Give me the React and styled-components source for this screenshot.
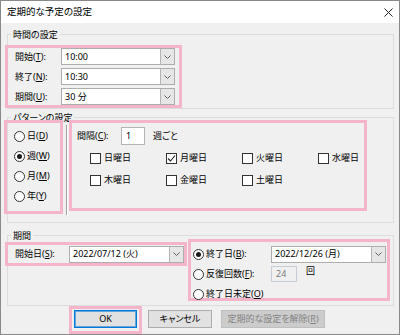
import React from 'react';
import styled, { createGlobalStyle } from 'styled-components';

const Global = createGlobalStyle`
  html, body { margin: 0; padding: 0; background: #fff; }
  body {
    font-family: "Noto Sans", "Noto Sans CJK JP", sans-serif;
    font-size: 9px;
    line-height: 12px;
    color: #000;
    text-autospace: no-autospace;
  }
  * { box-sizing: border-box; }
  u { text-underline-offset: 1px; }
`;

const PINK = '#f4b5cb';

const Window = styled.div`
  width: 400px;
  height: 335px;
  border: 1px solid #8a8a8a;
  background: #f0f0f0;
  display: flex;
  flex-direction: column;
  overflow: hidden;
  font-feature-settings: "palt";
`;

const TitleBar = styled.div`
  height: 22px;
  flex: none;
  background: #fff;
  display: flex;
  align-items: center;
  justify-content: space-between;
  padding: 0 6px 0 6px;
  font-size: 9.5px;
`;

const CloseIcon = styled.svg`
  width: 9px;
  height: 9px;
  display: block;
`;

const Body = styled.div`
  display: flex;
  flex-direction: column;
  padding: 0 5px 0 6px;
`;

const Group = styled.fieldset`
  margin: ${p => p.$mt}px 0 0 0;
  padding: 0;
  border: 1px solid #dcdcdc;
  min-width: 0;
`;

const Legend = styled.legend`
  margin-left: 3px;
  padding: 0 2px;
  line-height: 15px;
  font-size: 9px;
`;

const Highlight = styled.div`
  border: 3px solid ${PINK};
  flex: none;
`;

/* ---------- time section ---------- */
const TimeBox = styled(Highlight)`
  width: 177px;
  height: 63px;
  margin: 3px 0 0 -3px;
  padding: 0 4px 0 7px;
  display: flex;
  flex-direction: column;
  gap: 3px;
`;

const FieldRow = styled.div`
  display: flex;
  align-items: center;
  height: 17px;
`;

const FieldLabel = styled.span`
  width: ${p => p.$w}px;
  flex: none;
  white-space: nowrap;
`;

const Combo = styled.div`
  display: flex;
  width: ${p => p.$w}px;
  height: 17px;
  background: #fff;
  border: 1px solid #adadad;
  flex: none;
`;

const ComboText = styled.div`
  flex: 1;
  display: flex;
  align-items: center;
  padding-left: 3px;
  white-space: nowrap;
`;

const ComboButton = styled.div`
  width: 14px;
  background: #e6e6e6;
  border-left: 1px solid #b5b5b5;
  display: flex;
  align-items: center;
  justify-content: center;
`;

const Chevron = () => (
  <svg width="7" height="4" viewBox="0 0 7 4" style={{ display: 'block' }}>
    <polyline points="0.5,0.5 3.5,3.5 6.5,0.5" fill="none" stroke="#606060" strokeWidth="1" />
  </svg>
);

const ComboBox = ({ w, children }) => (
  <Combo $w={w}>
    <ComboText><span>{children}</span></ComboText>
    <ComboButton><Chevron /></ComboButton>
  </Combo>
);

/* ---------- pattern section ---------- */
const PatternRow = styled.div`
  display: flex;
  align-items: flex-start;
  margin-top: -5px;
  padding-bottom: 7px;
`;

const TypeBox = styled(Highlight)`
  width: 59px;
  height: 94px;
  margin-left: -4px;
  padding: 3px 0 0 7px;
  display: flex;
  flex-direction: column;
`;

const RadioRow = styled.label`
  display: flex;
  align-items: center;
  gap: 2px;
  height: ${p => p.$h || 20}px;
  white-space: nowrap;
`;

const RadioCircle = styled.span`
  width: 11px;
  height: 11px;
  border-radius: 50%;
  border: 1px solid #333;
  background: #fff;
  flex: none;
  display: inline-flex;
  align-items: center;
  justify-content: center;
  &::after {
    content: '';
    width: 5px;
    height: 5px;
    border-radius: 50%;
    background: #1a1a1a;
    display: ${p => (p.$on ? 'block' : 'none')};
  }
`;

const Radio = ({ on, h, children }) => (
  <RadioRow $h={h}>
    <RadioCircle $on={on} />
    <span>{children}</span>
  </RadioRow>
);

const Separator = styled.div`
  width: 2px;
  height: 90px;
  margin: 5px 0 0 3px;
  border-left: 1px solid #a0a0a0;
  border-right: 1px solid #fff;
  flex: none;
`;

const DetailBox = styled(Highlight)`
  width: 298px;
  height: 91px;
  margin-left: 1px;
  padding: 4px 0 0 5px;
`;

const IntervalRow = styled.div`
  display: flex;
  align-items: center;
  height: 18px;
`;

const TextInput = styled.div`
  width: ${p => p.$w}px;
  height: ${p => p.$h}px;
  background: ${p => (p.$disabled ? '#f0f0f0' : '#fff')};
  border: 1px solid ${p => (p.$disabled ? '#c5ccd4' : '#b4b4b4')};
  color: ${p => (p.$disabled ? '#7a7a7a' : '#000')};
  display: flex;
  align-items: center;
  padding-left: 4px;
  flex: none;
`;

const Suffix = styled.span`
  margin-left: ${p => p.$ml}px;
  align-self: ${p => p.$align || 'center'};
`;

const DayGrid = styled.div`
  display: grid;
  grid-template-columns: repeat(4, 76px);
  grid-auto-rows: 22px;
  margin: 2px 0 0 13px;
`;

const DayItem = styled.label`
  display: flex;
  align-items: center;
  gap: 3px;
  white-space: nowrap;
`;

const CheckSquare = styled.span`
  width: 11px;
  height: 11px;
  border: 1px solid #333;
  background: #fff;
  flex: none;
  display: inline-flex;
  align-items: center;
  justify-content: center;
`;

const CheckBox = ({ checked }) => (
  <CheckSquare>
    {checked && (
      <svg width="9" height="9" viewBox="0 0 9 9" style={{ display: 'block' }}>
        <polyline points="1,4.5 3.5,7 8,1.5" fill="none" stroke="#222" strokeWidth="1.1" />
      </svg>
    )}
  </CheckSquare>
);

/* ---------- period section ---------- */
const PeriodRow = styled.div`
  display: flex;
  align-items: flex-start;
  margin-top: -4px;
  padding-bottom: 4px;
`;

const StartBox = styled(Highlight)`
  width: 182px;
  height: 24px;
  margin: 3px 0 0 -3px;
  padding-left: 7px;
  display: flex;
  align-items: center;
`;

const EndBox = styled(Highlight)`
  width: 202px;
  height: 62px;
  margin-left: 1px;
  padding: 3px 0 0 2px;
  display: grid;
  grid-template-columns: 78px auto;
  grid-auto-rows: 18px;
  row-gap: 2px;
  align-items: center;
`;

const EndCell = styled.div`
  display: flex;
  align-items: center;
  height: 18px;
`;

/* ---------- buttons ---------- */
const ButtonRow = styled.div`
  display: flex;
  align-items: flex-start;
  margin-left: 62px;
`;

const OkFrame = styled(Highlight)`
  width: 73px;
  height: 28px;
  padding: 1px 2px 0 2px;
`;

const Button = styled.button`
  width: ${p => p.$w}px;
  height: 18px;
  margin: ${p => p.$m || '0'};
  padding: 0;
  font: inherit;
  font-size: 9px;
  background: ${p => (p.$disabled ? '#cccccc' : '#e1e1e1')};
  color: ${p => (p.$disabled ? '#838383' : '#000')};
  border: 1px solid ${p => (p.$primary ? '#0078d7' : p.$disabled ? '#bfbfbf' : '#adadad')};
  box-shadow: ${p => (p.$primary ? 'inset 0 0 0 1px rgba(0,120,215,0.55)' : 'none')};
  flex: none;
  white-space: nowrap;
`;

export default function App() {
  return (
    <>
      <Global />
      <Window>
        <TitleBar>
          <span>定期的な予定の設定</span>
          <CloseIcon viewBox="0 0 9 9">
            <path d="M0.5 0.5 L8.5 8.5 M8.5 0.5 L0.5 8.5" stroke="#222" strokeWidth="1" fill="none" />
          </CloseIcon>
        </TitleBar>
        <Body>
          <Group $mt={4}>
            <Legend>時間の設定</Legend>
            <TimeBox>
              <FieldRow>
                <FieldLabel $w={46}>開始(<u>T</u>):</FieldLabel>
                <ComboBox w={114}>10:00</ComboBox>
              </FieldRow>
              <FieldRow>
                <FieldLabel $w={46}>終了(<u>N</u>):</FieldLabel>
                <ComboBox w={114}>10:30</ComboBox>
              </FieldRow>
              <FieldRow>
                <FieldLabel $w={46}>期間(<u>U</u>):</FieldLabel>
                <ComboBox w={114}>30 分</ComboBox>
              </FieldRow>
            </TimeBox>
          </Group>

          <Group $mt={1}>
            <Legend>パターンの設定</Legend>
            <PatternRow>
              <TypeBox>
                <Radio>日(<u>D</u>)</Radio>
                <Radio on>週(<u>W</u>)</Radio>
                <Radio>月(<u>M</u>)</Radio>
                <Radio>年(<u>Y</u>)</Radio>
              </TypeBox>
              <Separator />
              <DetailBox>
                <IntervalRow>
                  <FieldLabel $w={44}>間隔(<u>C</u>):</FieldLabel>
                  <TextInput $w={24} $h={18}>1</TextInput>
                  <Suffix $ml={8}>週ごと</Suffix>
                </IntervalRow>
                <DayGrid>
                  <DayItem><CheckBox /><span>日曜日</span></DayItem>
                  <DayItem><CheckBox checked /><span>月曜日</span></DayItem>
                  <DayItem><CheckBox /><span>火曜日</span></DayItem>
                  <DayItem><CheckBox /><span>水曜日</span></DayItem>
                  <DayItem><CheckBox /><span>木曜日</span></DayItem>
                  <DayItem><CheckBox /><span>金曜日</span></DayItem>
                  <DayItem><CheckBox /><span>土曜日</span></DayItem>
                </DayGrid>
              </DetailBox>
            </PatternRow>
          </Group>

          <Group $mt={5}>
            <Legend>期間</Legend>
            <PeriodRow>
              <StartBox>
                <FieldLabel $w={54}>開始日(<u>S</u>):</FieldLabel>
                <ComboBox w={115}>2022/07/12 (火)</ComboBox>
              </StartBox>
              <EndBox>
                <Radio on h={18}>終了日(<u>B</u>):</Radio>
                <ComboBox w={115}>2022/12/26 (月)</ComboBox>
                <Radio h={18}>反復回数(<u>F</u>):</Radio>
                <EndCell>
                  <TextInput $w={26} $h={16} $disabled>24</TextInput>
                  <Suffix $ml={9} $align="flex-start">回</Suffix>
                </EndCell>
                <Radio h={18}>終了日未定(<u>O</u>)</Radio>
              </EndBox>
            </PeriodRow>
          </Group>

          <ButtonRow>
            <OkFrame>
              <Button $w={63} $primary>OK</Button>
            </OkFrame>
            <Button $w={64} $m="4px 0 0 6px">キャンセル</Button>
            <Button $w={104} $m="4px 0 0 9px" $disabled disabled>定期的な設定を解除(<u>R</u>)</Button>
          </ButtonRow>
        </Body>
      </Window>
    </>
  );
}
